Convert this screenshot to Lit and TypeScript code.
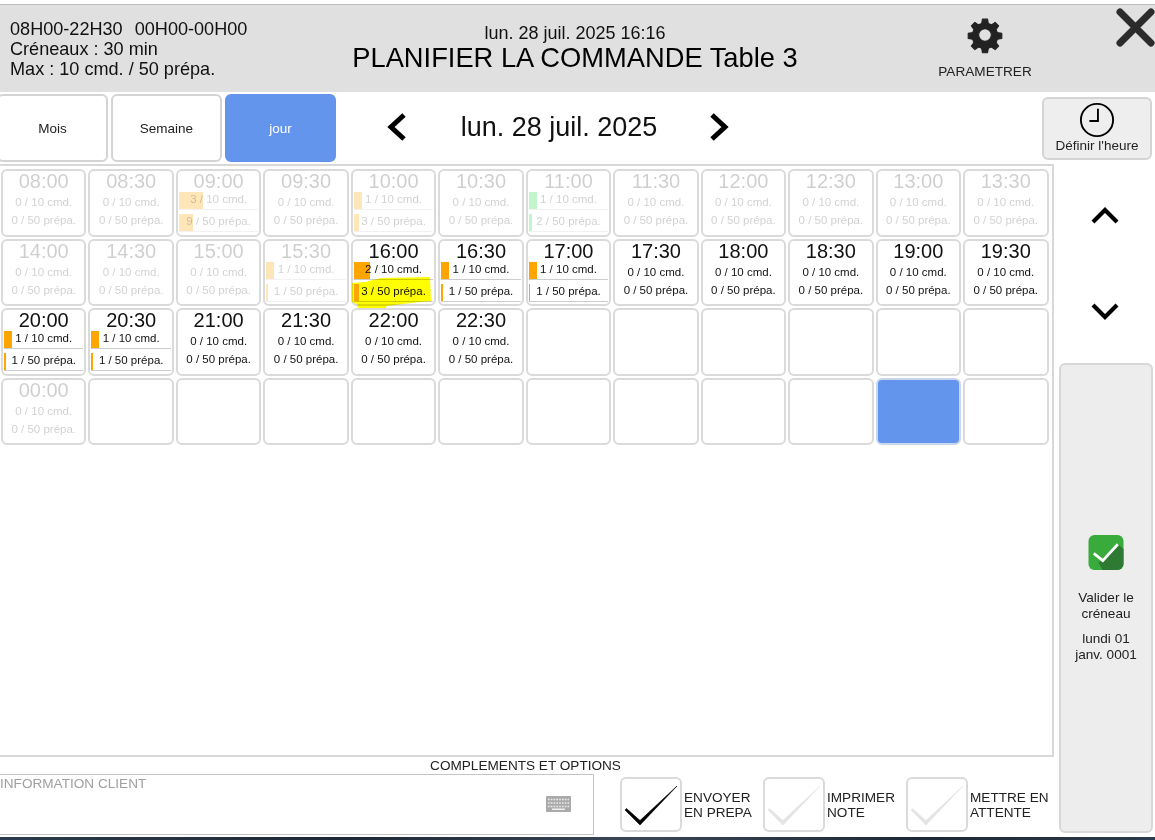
import { LitElement, html, css, svg } from "lit";
import { customElement } from "lit/decorators.js";

type Slot = { time?: string; cmd?: number; prep?: number; past?: boolean; green?: boolean; selected?: boolean; marked?: boolean };

const slots: Slot[] = [
  { time: "08:00", cmd: 0, prep: 0, past: true },
  { time: "08:30", cmd: 0, prep: 0, past: true },
  { time: "09:00", cmd: 3, prep: 9, past: true },
  { time: "09:30", cmd: 0, prep: 0, past: true },
  { time: "10:00", cmd: 1, prep: 3, past: true },
  { time: "10:30", cmd: 0, prep: 0, past: true },
  { time: "11:00", cmd: 1, prep: 2, past: true, green: true },
  { time: "11:30", cmd: 0, prep: 0, past: true },
  { time: "12:00", cmd: 0, prep: 0, past: true },
  { time: "12:30", cmd: 0, prep: 0, past: true },
  { time: "13:00", cmd: 0, prep: 0, past: true },
  { time: "13:30", cmd: 0, prep: 0, past: true },
  { time: "14:00", cmd: 0, prep: 0, past: true },
  { time: "14:30", cmd: 0, prep: 0, past: true },
  { time: "15:00", cmd: 0, prep: 0, past: true },
  { time: "15:30", cmd: 1, prep: 1, past: true },
  { time: "16:00", cmd: 2, prep: 3, marked: true },
  { time: "16:30", cmd: 1, prep: 1 },
  { time: "17:00", cmd: 1, prep: 1 },
  { time: "17:30", cmd: 0, prep: 0 },
  { time: "18:00", cmd: 0, prep: 0 },
  { time: "18:30", cmd: 0, prep: 0 },
  { time: "19:00", cmd: 0, prep: 0 },
  { time: "19:30", cmd: 0, prep: 0 },
  { time: "20:00", cmd: 1, prep: 1 },
  { time: "20:30", cmd: 1, prep: 1 },
  { time: "21:00", cmd: 0, prep: 0 },
  { time: "21:30", cmd: 0, prep: 0 },
  { time: "22:00", cmd: 0, prep: 0 },
  { time: "22:30", cmd: 0, prep: 0 },
  {}, {}, {}, {}, {}, {},
  { time: "00:00", cmd: 0, prep: 0, past: true },
  {}, {}, {}, {}, {}, {}, {}, {}, {},
  { selected: true },
  {},
];

const checkIcon = svg`<path d="M3 31 L4.5 29.5 L18 41.5 L55 7 L18 46 Z" fill="currentColor" stroke="currentColor" stroke-width="0.6" stroke-linejoin="round"/>`;

@customElement("app-root")
export class AppRoot extends LitElement {
  static styles = css`
    :host {
      display: block;
      width: 1155px;
      height: 840px;
      overflow: hidden;
      background: #fff;
      font-family: "Liberation Sans", Arial, sans-serif;
      color: #000;
    }

    .page {
      height: 840px;
      display: flex;
      flex-direction: column;
      padding-top: 4px;
      box-sizing: border-box;
    }

    .header {
      flex: none;
      height: 88px;
      box-sizing: border-box;
      border-top: 1px solid #bdbdbd;
      background: #e0e0e0;
      display: flex;
      position: relative;
    }

    .header__info {
      width: 300px;
      padding: 14px 0 0 10px;
      box-sizing: border-box;
      font-size: 18.1px;
      line-height: 20px;
      white-space: pre;
      color: #111;
    }

    .header__hours {
      word-spacing: 1px;
    }

    .header__title {
      width: 550px;
      text-align: center;
      padding-top: 18px;
      box-sizing: border-box;
      white-space: nowrap;
    }

    .header__date {
      font-size: 18px;
      line-height: 20px;
      color: #111;
    }

    .header__name {
      font-size: 27.3px;
      line-height: 30px;
    }

    .header__settings {
      width: 200px;
      margin-left: 35px;
      box-sizing: border-box;
      padding-top: 11px;
      display: flex;
      flex-direction: column;
      align-items: center;
      font-size: 13.6px;
      color: #222;
    }

    .header__settings svg {
      width: 38px;
      height: 38px;
      margin-bottom: 10px;
    }

    .close {
      position: absolute;
      right: 0;
      top: 3px;
      width: 39px;
      height: 39px;
    }

    .toolbar {
      flex: none;
      height: 72px;
      display: flex;
      align-items: center;
      box-sizing: border-box;
    }

    .tab {
      width: 111px;
      height: 68px;
      box-sizing: border-box;
      margin-right: 3px;
      border: 2px solid #d4d4d4;
      border-radius: 6px;
      font-size: 13.5px;
      display: flex;
      align-items: center;
      justify-content: center;
      color: #222;
    }

    .tab:first-child {
      margin-left: -3px;
    }

    .tab--active {
      background: #6495ed;
      border-color: #6495ed;
      color: #fff;
    }

    .nav {
      display: flex;
      align-items: center;
      margin-left: 44px;
      margin-bottom: 2px;
    }

    .nav svg {
      width: 28px;
      height: 30px;
    }

    .nav__date {
      width: 294px;
      text-align: center;
      text-indent: 2px;
      font-size: 27px;
      color: #111;
    }

    .set-time {
      margin-left: auto;
      margin-right: 3px;
      width: 110px;
      height: 63px;
      box-sizing: border-box;
      border: 2px solid #d4d4d4;
      border-radius: 6px;
      background: #eeeeee;
      display: flex;
      flex-direction: column;
      align-items: center;
      font-size: 13.5px;
      line-height: 15px;
      color: #222;
      padding-top: 3px;
    }

    .set-time svg {
      width: 36px;
      height: 36px;
    }

    .main {
      flex: 1;
      display: flex;
      min-height: 0;
    }

    .left {
      width: 1054px;
      display: flex;
      flex-direction: column;
    }

    .board {
      height: 593px;
      box-sizing: border-box;
      border: 2px solid #d8d8d8;
      border-left: 0;
      padding: 3px 3.5px 0 1px;
      display: grid;
      grid-template-columns: repeat(12, 1fr);
      grid-auto-rows: 67.6px;
      gap: 2px;
    }

    .slot {
      position: relative;
      box-sizing: border-box;
      border: 2px solid #dadada;
      border-radius: 6px;
      min-width: 0;
    }

    .slot--selected {
      background: #6495ed;
      border-color: #c9d6ee;
    }

    .slot__body {
      height: 100%;
      padding: 0 1px;
      display: flex;
      flex-direction: column;
      text-align: center;
    }

    .slot__time {
      font-size: 20px;
      line-height: 20px;
      color: #111;
    }

    .slot__plain {
      font-size: 11.5px;
      line-height: 18px;
      color: #111;
      white-space: nowrap;
    }

    .slot__time + .slot__plain {
      margin-top: 2px;
    }

    .meter {
      position: relative;
      height: 18px;
      font-size: 11.5px;
      line-height: 15px;
      color: #111;
      white-space: nowrap;
      box-sizing: border-box;
      border-bottom: 1px solid #ccc;
    }

    .slot__time + .meter {
      margin-top: 1px;
    }

    .meter + .meter {
      margin-top: 4px;
    }

    .meter__fill {
      position: absolute;
      left: 0;
      top: 0;
      bottom: 0;
      background: #ffa500;
    }

    .meter__fill--green {
      background: #22dd44;
    }

    .meter__text {
      position: relative;
    }

    .slot--past .slot__time,
    .slot--past .slot__plain,
    .slot--past .meter__text {
      opacity: 0.2;
    }

    .slot--past .meter {
      border-bottom-color: #f2f2f2;
    }

    .slot--past .meter__fill {
      opacity: 0.28;
    }

    .marker {
      position: absolute;
      left: -2px;
      top: 36px;
      width: 82px;
      height: 34px;
      mix-blend-mode: multiply;
    }

    .side {
      flex: 1;
      display: flex;
      flex-direction: column;
      padding: 0 2px 4px 5px;
      min-width: 0;
    }

    .arrow {
      flex: none;
      display: flex;
      justify-content: center;
      align-items: center;
      height: 98px;
      margin-right: 2px;
    }

    .arrow svg {
      width: 30px;
      height: 20px;
    }

    .arrow--up {
      height: 96px;
      margin-top: 3px;
    }

    .confirm {
      flex: 1;
      margin-top: 2px;
      box-sizing: border-box;
      border: 2px solid #d8d8d8;
      border-radius: 6px;
      background: #ededed;
      display: flex;
      flex-direction: column;
      align-items: center;
      font-size: 13.6px;
      line-height: 15.5px;
      text-align: center;
      color: #222;
      padding-top: 170px;
    }

    .confirm svg {
      width: 36px;
      height: 35px;
      margin-bottom: 20px;
    }

    .confirm__date {
      margin-top: 10px;
    }

    .caption {
      font-size: 13.6px;
      line-height: 17px;
      text-align: center;
      margin-left: -3px;
      color: #222;
      height: 17px;
    }

    .footer {
      display: flex;
    }

    .note {
      position: relative;
      width: 594px;
      height: 61px;
      box-sizing: border-box;
      border: 1px solid #c4c4c4;
      border-left: 0;
      font-size: 13.6px;
      color: #a0a0a0;
      padding-top: 1px;
    }

    .note svg {
      position: absolute;
      left: 546px;
      top: 21px;
      width: 25px;
      height: 16px;
    }

    .option {
      display: flex;
      align-items: center;
      width: 143px;
      font-size: 13.6px;
      line-height: 15px;
      color: #222;
    }

    .note + .option {
      margin-left: 26px;
    }

    .option__box {
      flex: none;
      width: 62px;
      height: 55px;
      box-sizing: border-box;
      border: 2px solid #dadada;
      border-radius: 6px;
      margin-right: 2px;
    }

    .option__box svg {
      width: 58px;
      height: 51px;
      display: block;
    }

    .option__box--on {
      color: #000;
    }

    .option__box--off {
      color: #e4e4e4;
    }

    .desktop {
      flex: none;
      height: 3px;
      background: linear-gradient(90deg, #2b3a4c, #1c2836 30%, #3a4658 55%, #1c2836 80%, #2b3a4c);
    }
  `;

  renderSlot(slot: Slot) {
    if (slot.selected) return html`<div class="slot slot--selected"></div>`;
    if (!slot.time) return html`<div class="slot"></div>`;
    return html`<div class="slot ${slot.past ? "slot--past" : ""}">
      <div class="slot__body">
        <div class="slot__time">${slot.time}</div>
        ${this.renderLine(slot, `${slot.cmd} / 10 cmd.`, slot.cmd! / 10)}
        ${this.renderLine(slot, `${slot.prep} / 50 prépa.`, slot.prep! / 50)}
      </div>
      ${slot.marked
        ? html`<svg class="marker" viewBox="0 0 82 34"><path d="M1 6 L14 5 L30 1 L79 0 L80 24 L60 26 L36 29 L33 32 L7 33 L6 27 L1 25 Z" fill="#ffff00"/></svg>`
        : ""}
    </div>`;
  }

  renderLine(slot: Slot, label: string, ratio: number) {
    if (slot.cmd === 0 && slot.prep === 0) return html`<div class="slot__plain">${label}</div>`;
    return html`<div class="meter">
      <div class="meter__fill ${slot.green ? "meter__fill--green" : ""}" style="width:${ratio * 100}%"></div>
      <span class="meter__text">${label}</span>
    </div>`;
  }

  render() {
    return html`<div class="page">
      <div class="header">
        <div class="header__info"><span class="header__hours">08H00-22H30  00H00-00H00</span>
Créneaux : 30 min
Max : 10 cmd. / 50 prépa.</div>
        <div class="header__title">
          <div class="header__date">lun. 28 juil. 2025 16:16</div>
          <div class="header__name">PLANIFIER LA COMMANDE Table 3</div>
        </div>
        <div class="header__settings">
          <svg viewBox="0 0 24 24"><path fill="#222" stroke="#222" stroke-width="0.7" stroke-linejoin="round" fill-rule="evenodd" d="M10.4 2h3.2l.5 2.8 2 .8 2.3-1.6 2.2 2.2-1.6 2.3.8 2 2.8.5v3.2l-2.8.5-.8 2 1.6 2.3-2.2 2.2-2.3-1.6-2 .8-.5 2.8h-3.2l-.5-2.8-2-.8-2.3 1.6-2.2-2.2 1.6-2.3-.8-2-2.8-.5v-3.2l2.8-.5.8-2-1.6-2.3 2.2-2.2 2.3 1.6 2-.8zM12 8a4 4 0 1 0 0 8 4 4 0 0 0 0-8z"/></svg>
          PARAMETRER
        </div>
        <svg class="close" viewBox="0 0 39 39"><path d="M4 4 L35 35 M35 4 L4 35" stroke="#2b2b2b" stroke-width="7" stroke-linecap="round"/></svg>
      </div>

      <div class="toolbar">
        <div class="tab">Mois</div>
        <div class="tab">Semaine</div>
        <div class="tab tab--active">jour</div>
        <div class="nav">
          <svg viewBox="0 0 28 30"><path d="M21 3 L8 15 L21 27" fill="none" stroke="#000" stroke-width="5"/></svg>
          <div class="nav__date">lun. 28 juil. 2025</div>
          <svg viewBox="0 0 28 30"><path d="M7 3 L20 15 L7 27" fill="none" stroke="#000" stroke-width="5"/></svg>
        </div>
        <div class="set-time">
          <svg viewBox="0 0 38 38"><circle cx="19" cy="19" r="17" fill="none" stroke="#000" stroke-width="2"/><path d="M20 7 V20 H11" fill="none" stroke="#000" stroke-width="2"/></svg>
          Définir l'heure
        </div>
      </div>

      <div class="main">
        <div class="left">
          <div class="board">${slots.map((s) => this.renderSlot(s))}</div>
          <div class="caption">COMPLEMENTS ET OPTIONS</div>
          <div class="footer">
            <div class="note">
              INFORMATION CLIENT
              <svg viewBox="0 0 25 16"><rect width="25" height="16" rx="1" fill="#aaa"/><path d="M2 3.5h21M2 7h21M2 10.5h21" stroke="#eee" stroke-width="1.4" stroke-dasharray="1.6 1.2"/><rect x="6" y="12.5" width="13" height="1.5" fill="#eee"/></svg>
            </div>
            <div class="option">
              <div class="option__box option__box--on"><svg viewBox="0 0 58 51">${checkIcon}</svg></div>
              <div>ENVOYER<br />EN PREPA</div>
            </div>
            <div class="option">
              <div class="option__box option__box--off"><svg viewBox="0 0 58 51">${checkIcon}</svg></div>
              <div>IMPRIMER<br />NOTE</div>
            </div>
            <div class="option">
              <div class="option__box option__box--off"><svg viewBox="0 0 58 51">${checkIcon}</svg></div>
              <div>METTRE EN<br />ATTENTE</div>
            </div>
          </div>
        </div>
        <div class="side">
          <div class="arrow arrow--up"><svg viewBox="0 0 30 20"><path d="M3 17 L15 5 L27 17" fill="none" stroke="#000" stroke-width="4.2"/></svg></div>
          <div class="arrow"><svg viewBox="0 0 30 20"><path d="M3 3 L15 15 L27 3" fill="none" stroke="#000" stroke-width="4.2"/></svg></div>
          <div class="confirm">
            <svg viewBox="0 0 35 35">
              <rect width="35" height="35" rx="6" fill="#39aa3c"/>
              <path d="M6 20 L10 27 L14 26 L29 9 L35 14 V29 A6 6 0 0 1 29 35 H14 Z" fill="#2e7a33"/>
              <path d="M5.3 18.3 L14.3 25.7 L29.3 9.3" fill="none" stroke="#fff" stroke-width="2.8"/>
            </svg>
            <div>Valider le<br />créneau</div>
            <div class="confirm__date">lundi 01<br />janv. 0001</div>
          </div>
        </div>
      </div>
      <div class="desktop"></div>
    </div>`;
  }
}
